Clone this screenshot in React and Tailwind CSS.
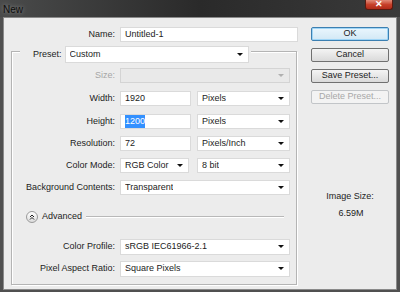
// New Document dialog (Photoshop-style, Win7 dark frame)
const FONT = "font-['Liberation_Sans',Arial,sans-serif]";

// small filled dropdown triangle
const Caret = ({ disabled }) => (
  <span
    className={
      disabled
        ? "h-0 w-0 border-x-[3px] border-t-[3px] border-x-transparent border-t-[#b0b0b0]"
        : "h-0 w-0 border-x-[3px] border-t-[3px] border-x-transparent border-t-[#111]"
    }
  />
);

const Select = ({ value, className = "", disabled }) => (
  <div
    className={`flex h-[15px] items-center justify-between border pl-[4px] pr-[5px] ${
      disabled ? "border-[#d4d4d4] bg-[#e9e9e9]" : "border-[#dadada] bg-white"
    } ${className}`}
  >
    <span className="truncate">{value}</span>
    <Caret disabled={disabled} />
  </div>
);

const Input = ({ children, className = "" }) => (
  <div className={`flex h-[15px] items-center border border-[#dadada] bg-white pl-[4px] ${className}`}>
    {children}
  </div>
);

const Row = ({ label, disabled, className = "", children }) => (
  <div className={`flex items-center ${className}`}>
    <span className={`w-[108px] shrink-0 pr-[5px] text-right ${disabled ? "text-[#a6a6a6]" : ""}`}>
      {label}
    </span>
    {children}
  </div>
);

const Button = ({ children, primary, disabled }) => (
  <div
    className={`flex h-[14px] items-center justify-center rounded-[2px] border ${
      disabled
        ? "border-[#c2c5c8] bg-[#f3f3f3] text-[#a8a8a8]"
        : primary
        ? "border-[#3c7fb1] bg-gradient-to-b from-[#eaf6fd] to-[#d2e8f5] shadow-[inset_0_0_0_1px_#9fd5f6]"
        : "border-[#707070] bg-gradient-to-b from-[#f4f4f4] to-[#dadada]"
    }`}
  >
    {children}
  </div>
);

export default function App() {
  return (
    <div className={`flex h-[292px] w-[400px] flex-col overflow-hidden bg-[#505050] text-[9px] text-[#1c1c1c] ${FONT}`}>
      {/* title bar */}
      <div className="flex h-[17px] shrink-0 items-start justify-between bg-gradient-to-r from-[#4a4b4b] via-[#2a2a2a] to-[#3a3a3a]">
        <span className="pl-[3px] pt-[2px] text-[10px] text-[#0c0c0c] [text-shadow:0_0_4px_#9a9a9a]">New</span>
        <div className="mr-[7px] flex h-[10px] w-[28px] items-center justify-center rounded-b-[3px] border border-t-0 border-[#5a1a10] bg-gradient-to-b from-[#e08a78] via-[#c7402a] to-[#b02a18] text-[9px] font-bold leading-none text-white">
          ✕
        </div>
      </div>

      {/* dialog body */}
      <div className="mx-[3px] flex h-[273px] border border-[#8a8a8a] bg-[#ececec]">
        {/* left column */}
        <div className="w-[297px] pl-[7px] pt-[9px]">
          <div className="flex items-center">
            <span className="w-[109px] pr-[5px] text-right">Name:</span>
            <Input className="w-[178px]">Untitled-1</Input>
          </div>

          {/* preset group */}
          <div className="mt-[9px] h-[234px] w-[286px] border border-[#b4b4b4] shadow-[inset_1px_1px_0_#fff,1px_1px_0_#fff]">
            <div className="-mt-[6px] ml-[8px] flex w-[231px] items-center bg-[#ececec] pl-[13px]">
              <span className="pr-[3px]">Preset:</span>
              <Select value="Custom" className="h-[17px] w-[184px]" />
            </div>

            <Row label="Size:" disabled className="mt-[5px]">
              <Select value="" disabled className="w-[170px]" />
            </Row>
            <Row label="Width:" className="mt-[8px]">
              <Input className="w-[71px]">1920</Input>
              <Select value="Pixels" className="ml-[6px] w-[93px]" />
            </Row>
            <Row label="Height:" className="mt-[8px]">
              <Input className="w-[71px]">
                <span className="bg-[#3390ff] text-white">1200</span>
              </Input>
              <Select value="Pixels" className="ml-[6px] w-[93px]" />
            </Row>
            <Row label="Resolution:" className="mt-[7px]">
              <Input className="w-[71px]">72</Input>
              <Select value="Pixels/Inch" className="ml-[6px] w-[93px]" />
            </Row>
            <Row label="Color Mode:" className="mt-[7px]">
              <Select value="RGB Color" className="w-[69px]" />
              <Select value="8 bit" className="ml-[8px] w-[93px]" />
            </Row>
            <Row label="Background Contents:" className="mt-[7px]">
              <Select value="Transparent" className="w-[170px]" />
            </Row>

            {/* advanced toggle */}
            <div className="mt-[15px] flex items-center">
              <div className="ml-[14px] flex h-[12px] w-[12px] items-center justify-center rounded-full border border-[#9a9a9a] bg-gradient-to-b from-white to-[#dcdcdc]">
                <svg width="6" height="6" viewBox="0 0 6 6" fill="none" stroke="#222" strokeWidth="1">
                  <path d="M1 3 L3 1 L5 3 M1 5.5 L3 3.5 L5 5.5" />
                </svg>
              </div>
              <span className="ml-[4px]">Advanced</span>
              <div className="ml-[4px] mr-[12px] h-[2px] flex-1 border-t border-b border-t-[#b8b8b8] border-b-white" />
            </div>

            <Row label="Color Profile:" className="mt-[15px]">
              <Select value="sRGB IEC61966-2.1" className="h-[16px] w-[170px]" />
            </Row>
            <Row label="Pixel Aspect Ratio:" className="mt-[6px]">
              <Select value="Square Pixels" className="h-[16px] w-[170px]" />
            </Row>
          </div>
        </div>

        {/* right column */}
        <div className="ml-[10px] flex w-[78px] flex-col pt-[9px]">
          <div className="flex flex-col gap-[7px]">
            <Button primary>OK</Button>
            <Button>Cancel</Button>
            <Button>Save Preset...</Button>
            <Button disabled>Delete Preset...</Button>
          </div>
          <div className="mt-[86px] text-center">Image Size:</div>
          <div className="mt-[3px] pl-[2px] text-center">6.59M</div>
        </div>
      </div>
    </div>
  );
}
